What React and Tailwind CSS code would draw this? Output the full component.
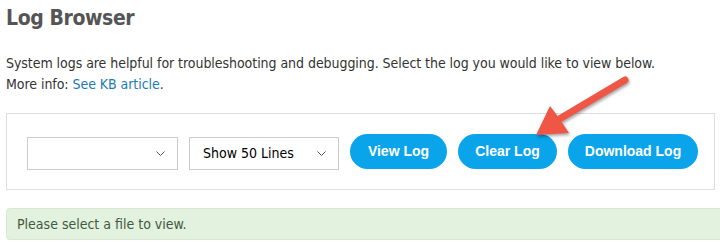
import React from 'react';

const tahoma = "font-['DejaVu_Sans_Condensed','DejaVu_Sans',sans-serif]";

function Chevron() {
  return (
    <svg width="9" height="5" viewBox="0 0 9 5" className="pointer-events-none absolute right-[13px] top-[14px]">
      <path d="M0.5 0.5 L4.5 4.5 L8.5 0.5" fill="none" stroke="#555" strokeWidth="1" />
    </svg>
  );
}

function Select({ width, children }) {
  return (
    <div className={`relative ${width} h-[33px] mt-[3px] shrink-0`}>
      <select className={`appearance-none w-full h-full border border-[#ccc] bg-white pl-[13px] text-[14px] text-black outline-none ${tahoma}`}>
        {children}
      </select>
      <Chevron />
    </div>
  );
}

const buttons = [
  { label: 'View Log', w: 'w-[97px]' },
  { label: 'Clear Log', w: 'w-[99px]' },
  { label: 'Download Log', w: 'w-[130px]' },
];

export default function App() {
  return (
    <div className="relative w-[720px] h-[248px] overflow-hidden bg-white pl-[6px]">
      {/* Header */}
      <h1 className={`pt-[5px] text-[21px] leading-[26px] font-bold tracking-[-0.4px] text-[#555] ${tahoma}`}>Log Browser</h1>

      <p className={`mt-[22px] text-[14px] leading-[21px] tracking-[-0.05px] text-[#333] ${tahoma}`}>
        System logs are helpful for troubleshooting and debugging. Select the log you would like to view below.
        <br />
        More info: <a href="#" className="text-[#1a7bb0]">See KB article</a>.
      </p>

      {/* Controls */}
      <div className="mt-[18px] w-[709px] h-[77px] border border-[#ddd] flex items-start gap-[11px] pl-[20px] pt-[20px]">
        <Select width="w-[151px]"><option></option></Select>
        <Select width="w-[150px]"><option>Show 50 Lines</option></Select>
        {buttons.map(b => (
          <button
            key={b.label}
            className={`${b.w} h-[35px] shrink-0 rounded-full bg-[#0aa4ea] text-white text-[14px] font-bold font-['Liberation_Sans',Arial,sans-serif]`}
          >
            {b.label}
          </button>
        ))}
      </div>

      {/* Notice */}
      <div className={`mt-[18px] w-[730px] h-[32px] rounded-[4px] border border-[#d6e9d2] bg-[#e3f1df] pl-[10px] flex items-center text-[14px] text-[#3f5a3f] ${tahoma}`}>
        Please select a file to view.
      </div>

      {/* Annotation arrow */}
      <svg width="720" height="248" className="pointer-events-none absolute left-0 top-0 drop-shadow-[1px_2px_1.5px_rgba(0,0,0,0.35)]">
        <line x1="625" y1="80" x2="556" y2="121" stroke="#ef5646" strokeWidth="7" strokeLinecap="round" />
        <polygon points="536,135 550,106 559,118 569,133" fill="#ef5646" />
      </svg>
    </div>
  );
}
